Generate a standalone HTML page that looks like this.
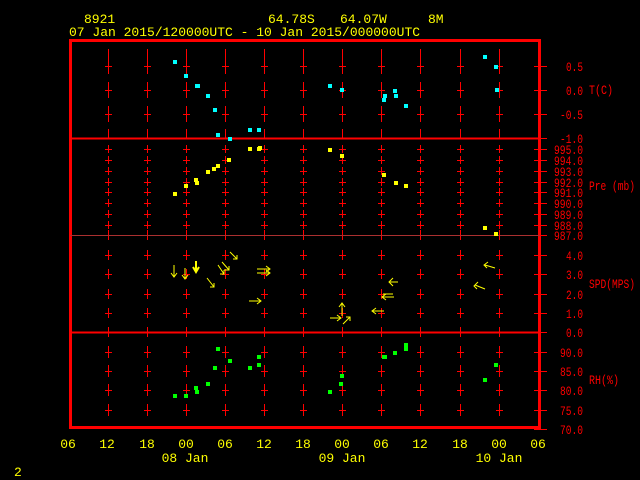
<!DOCTYPE html>
<html><head><meta charset="utf-8"><style>
html,body{margin:0;padding:0;background:#000;width:640px;height:480px;overflow:hidden}
svg text{font-family:"Liberation Mono","DejaVu Sans Mono",monospace}
</style></head><body>
<svg width="640" height="480" viewBox="0 0 640 480" xmlns="http://www.w3.org/2000/svg">
<g fill="#ffff00" font-size="13">
<text x="84" y="23">8921</text><text x="268" y="23">64.78S</text><text x="340" y="23">64.07W</text><text x="428" y="23">8M</text>
<text x="69" y="36">07 Jan 2015/120000UTC - 10 Jan 2015/000000UTC</text>
<g text-anchor="middle">
<text x="68" y="448">06</text><text x="107" y="448">12</text><text x="147" y="448">18</text><text x="186" y="448">00</text><text x="225" y="448">06</text><text x="264" y="448">12</text><text x="303" y="448">18</text><text x="342" y="448">00</text><text x="381" y="448">06</text><text x="420" y="448">12</text><text x="460" y="448">18</text><text x="499" y="448">00</text><text x="538" y="448">06</text>
<text x="185" y="462">08 Jan</text><text x="342" y="462">09 Jan</text><text x="499" y="462">10 Jan</text>
</g>
<text x="14" y="476">2</text>
</g>
<g stroke="#ff0000" stroke-width="1" id="grid"></g>
<g fill="#ff0000" font-size="13" id="lbl"></g>
<g fill="#ff0000" font-size="13">
<text x="589" y="94" textLength="24" lengthAdjust="spacingAndGlyphs">T(C)</text>
<text x="589" y="190" textLength="46" lengthAdjust="spacingAndGlyphs">Pre (mb)</text>
<text x="589" y="288" textLength="46" lengthAdjust="spacingAndGlyphs">SPD(MPS)</text>
<text x="589" y="384" textLength="30" lengthAdjust="spacingAndGlyphs">RH(%)</text>
</g>
<g fill="none" stroke="#ff0000">
<rect x="70.5" y="40.5" width="469" height="387" stroke-width="3"/>
<line x1="70" y1="138.5" x2="540" y2="138.5" stroke-width="2"/>
<line x1="70" y1="235.5" x2="540" y2="235.5" stroke="#aa3030" stroke-width="1"/>
<line x1="70" y1="332.5" x2="540" y2="332.5" stroke-width="2"/>
</g>
<g fill="#00ffff" id="cy"></g>
<g fill="#ffff00" id="ye"></g>
<g fill="#00ff00" id="gr"></g>
<g stroke="#ffff00" stroke-width="1" fill="none">
<path d="M174 265V277M171 273L174 277L177 273"/>
<path d="M185 268V279M182 275L185 279L188 275"/>
<path d="M196 261V272M193 267L196 272L199 267" stroke-width="2"/>
<path d="M207 278L214 287M210 287H214V283"/>
<path d="M218 265L224 274M220 274H224V270"/>
<path d="M222 262L229 270M224 270H229V266"/>
<path d="M230 252L237 259M233 259H237V255"/>
<path d="M257 269H270M266 266L270 269L266 272M257 273H270M266 270L270 273L266 276"/>
<path d="M249 301H261M257 298L261 301L257 304"/>
<path d="M330 318H341M337 315L341 318L337 321"/>
<path d="M342 316V303M339 307L342 303L345 307"/>
<path d="M343 324L350 317M346 317H350V321"/>
<path d="M384 311H372M376 308L372 311L376 314"/>
<path d="M394 297H382M386 294L382 297L386 300M393 294H383"/>
<path d="M398 282H389M393 278L389 282L393 286"/>
<path d="M495 268L485 265M488 262L484 265L487 268"/>
<path d="M485 289L475 285M478 282L474 286L477 289"/>
</g>
</svg>
<script>
var ns="http://www.w3.org/2000/svg";
function el(p,t,a){var e=document.createElementNS(ns,t);for(var k in a)e.setAttribute(k,a[k]);p.appendChild(e);return e;}
var g=document.getElementById('grid'),L=document.getElementById('lbl');
var cols=[108,147,186,225,264,303,342,381,420,460,499];
function plus(x,y,h,v){el(g,'line',{x1:x-h,y1:y+.5,x2:x+h+1,y2:y+.5});el(g,'line',{x1:x+.5,y1:y-v,x2:x+.5,y2:y+v});}
var T=[66,90,114],P=[149,160,171,182,192,203,214,225],S=[255,274,294,313],R=[352,371,390,410];
cols.forEach(function(x){
 el(g,'line',{x1:x+.5,y1:49,x2:x+.5,y2:59});el(g,'line',{x1:x+.5,y1:129,x2:x+.5,y2:138});
 T.forEach(function(y){plus(x,y,3,8)});
 P.forEach(function(y){plus(x,y,3,4)});
 S.forEach(function(y){plus(x,y,3,5)});
 R.forEach(function(y){plus(x,y,3,6)});
 el(g,'line',{x1:x+.5,y1:230,x2:x+.5,y2:240});el(g,'line',{x1:x+.5,y1:327,x2:x+.5,y2:337});
});
var rl=[[66,'0.5'],[90,'0.0'],[114,'-0.5'],[138,'-1.0'],[149,'995.0'],[160,'994.0'],[171,'993.0'],[182,'992.0'],[192,'991.0'],[203,'990.0'],[214,'989.0'],[225,'988.0'],[235,'987.0'],[255,'4.0'],[274,'3.0'],[294,'2.0'],[313,'1.0'],[332,'0.0'],[352,'90.0'],[371,'85.0'],[390,'80.0'],[410,'75.0'],[429,'70.0']];
rl.forEach(function(r){el(g,'line',{x1:534,y1:r[0]+.5,x2:547,y2:r[0]+.5});var w=r[1].length*6;var t=el(L,'text',{x:584-w,y:r[0]+5,textLength:w-1,lengthAdjust:'spacingAndGlyphs'});t.textContent=r[1];});
function pts(id,a){var p=document.getElementById(id);a.forEach(function(q){el(p,'rect',{x:q[0]-2,y:q[1]-2,width:4,height:4});});}
pts('cy',[[175,62],[186,76],[197,86],[198,86],[208,96],[215,110],[218,135],[230,139],[250,130],[259,130],[330,86],[342,90],[384,100],[385,96],[395,91],[396,96],[406,106],[485,57],[496,67],[497,90]]);
pts('ye',[[175,194],[186,186],[196,180],[197,183],[208,172],[214,169],[218,166],[229,160],[250,149],[259,149],[260,148],[330,150],[342,156],[384,175],[396,183],[406,186],[485,228],[496,234]]);
pts('gr',[[175,396],[186,396],[196,388],[197,392],[208,384],[218,349],[230,361],[215,368],[250,368],[259,357],[259,365],[330,392],[342,376],[341,384],[384,357],[385,357],[395,353],[406,345],[406,349],[485,380],[496,365]]);
</script>
</body></html>
